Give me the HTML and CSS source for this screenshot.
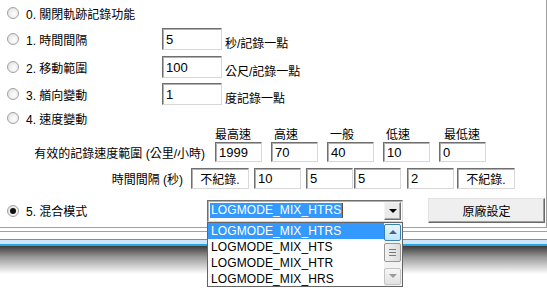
FILE: index.html
```
<!DOCTYPE html>
<html>
  <head>
    <meta charset="utf-8">
    <link rel="stylesheet" href="styles.css">
  </head>
  <body>
    <div class="panel">
      <div class="row r0">
        <div class="opt"><span class="radio"></span>0. 關閉軌跡記錄功能</div>
      </div>
      <div class="row r1">
        <div class="opt w162"><span class="radio"></span>1. 時間間隔</div>
        <div class="field wide">5</div>
        <div class="unit">秒/記錄一點</div>
      </div>
      <div class="row r2">
        <div class="opt w162"><span class="radio"></span>2. 移動範圍</div>
        <div class="field wide">100</div>
        <div class="unit">公尺/記錄一點</div>
      </div>
      <div class="row r3">
        <div class="opt w162"><span class="radio"></span>3. 艏向變動</div>
        <div class="field wide">1</div>
        <div class="unit">度記錄一點</div>
      </div>
      <div class="row r4">
        <div class="opt"><span class="radio"></span>4. 速度變動</div>
      </div>
      <div class="row hdr">
        <div class="lead"></div>
        <div class="col">最高速</div>
        <div class="col p3">高速</div>
        <div class="col p3">一般</div>
        <div class="col p3">低速</div>
        <div class="col p5">最低速</div>
      </div>
      <div class="row speed">
        <div class="lead">有效的記錄速度範圍 (公里/小時)</div>
        <div class="field cell">1999</div>
        <div class="field cell">70</div>
        <div class="field cell">40</div>
        <div class="field cell">10</div>
        <div class="field cell">0</div>
      </div>
      <div class="row interval">
        <div class="lead short">時間間隔 (秒)</div>
        <div class="field static">不紀錄.</div>
        <div class="field cell ml5">10</div>
        <div class="field cell ml5">5</div>
        <div class="field cell ml1">5</div>
        <div class="field cell ml6">2</div>
        <div class="field static ml3">不紀錄.</div>
      </div>
      <div class="row r5">
        <div class="opt w207"><span class="radio on"></span>5. 混合模式</div>
        <div class="combo">
          <span class="sel">LOGMODE_MIX_HTRS</span><span class="caret"></span>
          <span class="drop"><span class="tri"></span></span>
          <div class="droplist">
            <div class="items">
              <div class="item active">LOGMODE_MIX_HTRS</div>
              <div class="item">LOGMODE_MIX_HTS</div>
              <div class="item">LOGMODE_MIX_HTR</div>
              <div class="item">LOGMODE_MIX_HRS</div>
            </div>
            <div class="scroll">
              <div class="sbtn up"><span class="tri-up"></span></div>
              <div class="thumb"><span></span><span></span><span></span></div>
              <div class="sbtn down"><span class="tri-down"></span></div>
            </div>
          </div>
        </div>
        <div class="btn">原廠設定</div>
      </div>
    </div>
    <div class="edge"></div>
    <div class="bar"></div>
    <div class="shade"></div>
    <div class="rest"></div>
  </body>
</html>
```

FILE: styles.css
```
body {
    margin: 0;
    background: #fff;
    color: #000;
    font: 12px "Liberation Sans", "Noto Sans CJK TC", sans-serif;
    overflow: hidden;
}
.panel {
    position: relative;
    z-index: 2;
    width: 546px;
    height: 225px;
    padding-top: 2px;
    border-right: 1px solid #a0a0a0;
    border-bottom: 1px solid #a0a0a0;
}
.row {
    display: flex;
    align-items: center;
    white-space: nowrap;
}
.r0 { height: 22px; }
.r1 { height: 22px; margin-top: 4px; }
.r2 { height: 22px; margin-top: 6px; }
.r3 { height: 22px; margin-top: 5px; }
.r4 { height: 16px; margin-top: 5px; }
.hdr { height: 14px; }
.speed { height: 20px; margin-top: 2px; }
.interval { height: 21px; margin-top: 6px; }
.r5 { height: 25px; margin-top: 9px; }

.opt {
    display: flex;
    align-items: center;
    padding-left: 7px;
    box-sizing: border-box;
}
.w162 { width: 162px; }
.w207 { width: 207px; }
.radio {
    display: inline-block;
    position: relative;
    width: 12px;
    height: 12px;
    margin-right: 7px;
    border: 1px solid #a2a2a2;
    border-radius: 50%;
    background: radial-gradient(circle at 60% 60%, #fdfdfd 0, #f0f0f0 45%, #d8d8d8 100%);
    box-sizing: border-box;
}
.radio.on:after {
    position: absolute;
    top: 2px;
    left: 2px;
    width: 6px;
    height: 6px;
    border-radius: 50%;
    background: #111;
    content: "";
}

.field {
    height: 100%;
    box-sizing: border-box;
    border: 1px solid;
    border-color: #6f6f6f #d8d8d8 #d8d8d8 #6f6f6f;
    box-shadow: inset 1px 1px 0 #b0b0b0;
    padding-left: 3px;
    font-size: 13px;
    display: flex;
    align-items: center;
}
.wide { width: 60px; }
.cell { width: 47px; }
.static {
    width: 58px;
    justify-content: center;
    padding-left: 0;
    font-size: 12px;
}
.unit {
    align-self: flex-end;
    margin-left: 3px;
    line-height: 14px;
    margin-bottom: -1px;
}
.lead {
    width: 215px;
    padding-right: 10px;
    box-sizing: border-box;
    text-align: right;
}
.lead.short {
    width: 191px;
    padding-right: 8px;
}
.speed .cell + .cell { margin-left: 9px; }
.col {
    width: 47px;
    box-sizing: border-box;
}
.col + .col { margin-left: 9px; }
.p3 { padding-left: 3px; }
.p5 { padding-left: 5px; }
.ml1 { margin-left: 1px; }
.ml3 { margin-left: 3px; }
.ml5 { margin-left: 5px; }
.ml6 { margin-left: 6px; }

.combo {
    position: relative;
    display: flex;
    align-items: center;
    width: 196px;
    height: 22px;
    box-sizing: border-box;
    border: 1px solid;
    border-color: #6f6f6f #d8d8d8 #d8d8d8 #6f6f6f;
    box-shadow: inset 1px 1px 0 #b0b0b0;
    padding-left: 2px;
}
.sel {
    background: #3399ff;
    color: #fff;
    font-size: 12px;
    letter-spacing: 0.1px;
    line-height: 15px;
    padding: 0 1px;
}
.caret {
    width: 1px;
    height: 15px;
    background: #6a4a2a;
}
.drop {
    display: flex;
    align-items: center;
    justify-content: center;
    margin-left: auto;
    margin-right: 1px;
    width: 17px;
    height: 18px;
    box-sizing: border-box;
    border: 1px solid;
    border-color: #f4f4f4 #6e6e6e #6e6e6e #f4f4f4;
    box-shadow: inset -1px -1px 0 #a8a8a8;
    background: #eaeaea;
}
.tri {
    width: 0;
    height: 0;
    border-left: 4px solid transparent;
    border-right: 4px solid transparent;
    border-top: 4px solid #000;
}
.droplist {
    position: absolute;
    z-index: 5;
    top: 21px;
    left: -1px;
    display: flex;
    width: 196px;
    height: 65px;
    box-sizing: border-box;
    border: 1px solid #646464;
    background: #fff;
}
.items {
    flex: 1;
}
.item {
    height: 16px;
    line-height: 16px;
    padding-left: 3px;
    font-size: 12px;
    letter-spacing: 0.1px;
}
.item.active {
    background: #3399ff;
    color: #fff;
}
.scroll {
    display: flex;
    flex-direction: column;
    width: 17px;
    background: #f3f3f3;
    padding: 1px 1px 1px 0;
}
.sbtn {
    display: flex;
    align-items: center;
    justify-content: center;
    height: 17px;
    box-sizing: border-box;
    border-radius: 2px;
}
.up {
    border: 1px solid #3c7fb1;
    background: linear-gradient(#eaf6fd, #bee6fd);
}
.down {
    margin-top: auto;
    border: 1px solid #c4c4c4;
    background: linear-gradient(#f6f6f6, #e2e2e2);
}
.tri-up {
    border-left: 4px solid transparent;
    border-right: 4px solid transparent;
    border-bottom: 4px solid #4d6185;
}
.tri-down {
    border-left: 4px solid transparent;
    border-right: 4px solid transparent;
    border-top: 4px solid #9a9a9a;
}
.thumb {
    display: flex;
    flex-direction: column;
    align-items: center;
    justify-content: center;
    gap: 2px;
    height: 19px;
    margin-top: 2px;
    box-sizing: border-box;
    border: 1px solid #979797;
    border-radius: 2px;
    background: linear-gradient(90deg, #f2f2f2, #dcdcdc);
}
.thumb span {
    width: 7px;
    height: 1px;
    background: #7a7a7a;
}
.btn {
    display: flex;
    align-items: center;
    justify-content: center;
    width: 117px;
    height: 25px;
    margin-left: 25px;
    box-sizing: border-box;
    border: 1px solid;
    border-color: #e3e3e3 #6a6a6a #6a6a6a #e3e3e3;
    box-shadow: inset -1px -1px 0 #a0a0a0;
    background: #efefef;
}

.edge {
    margin-top: 3px;
    height: 7px;
    border-top: 1px solid #a0a0a0;
}
.bar {
    height: 4px;
    border-top: 1px solid #8c8c8c;
    border-bottom: 2px solid #2aa4e6;
    background: #cfe4f8;
}
.shade {
    height: 28px;
    background: linear-gradient(#3c3c3c, #9a9a9a 40%, #fff);
}
.rest {
    height: 20px;
}
```
